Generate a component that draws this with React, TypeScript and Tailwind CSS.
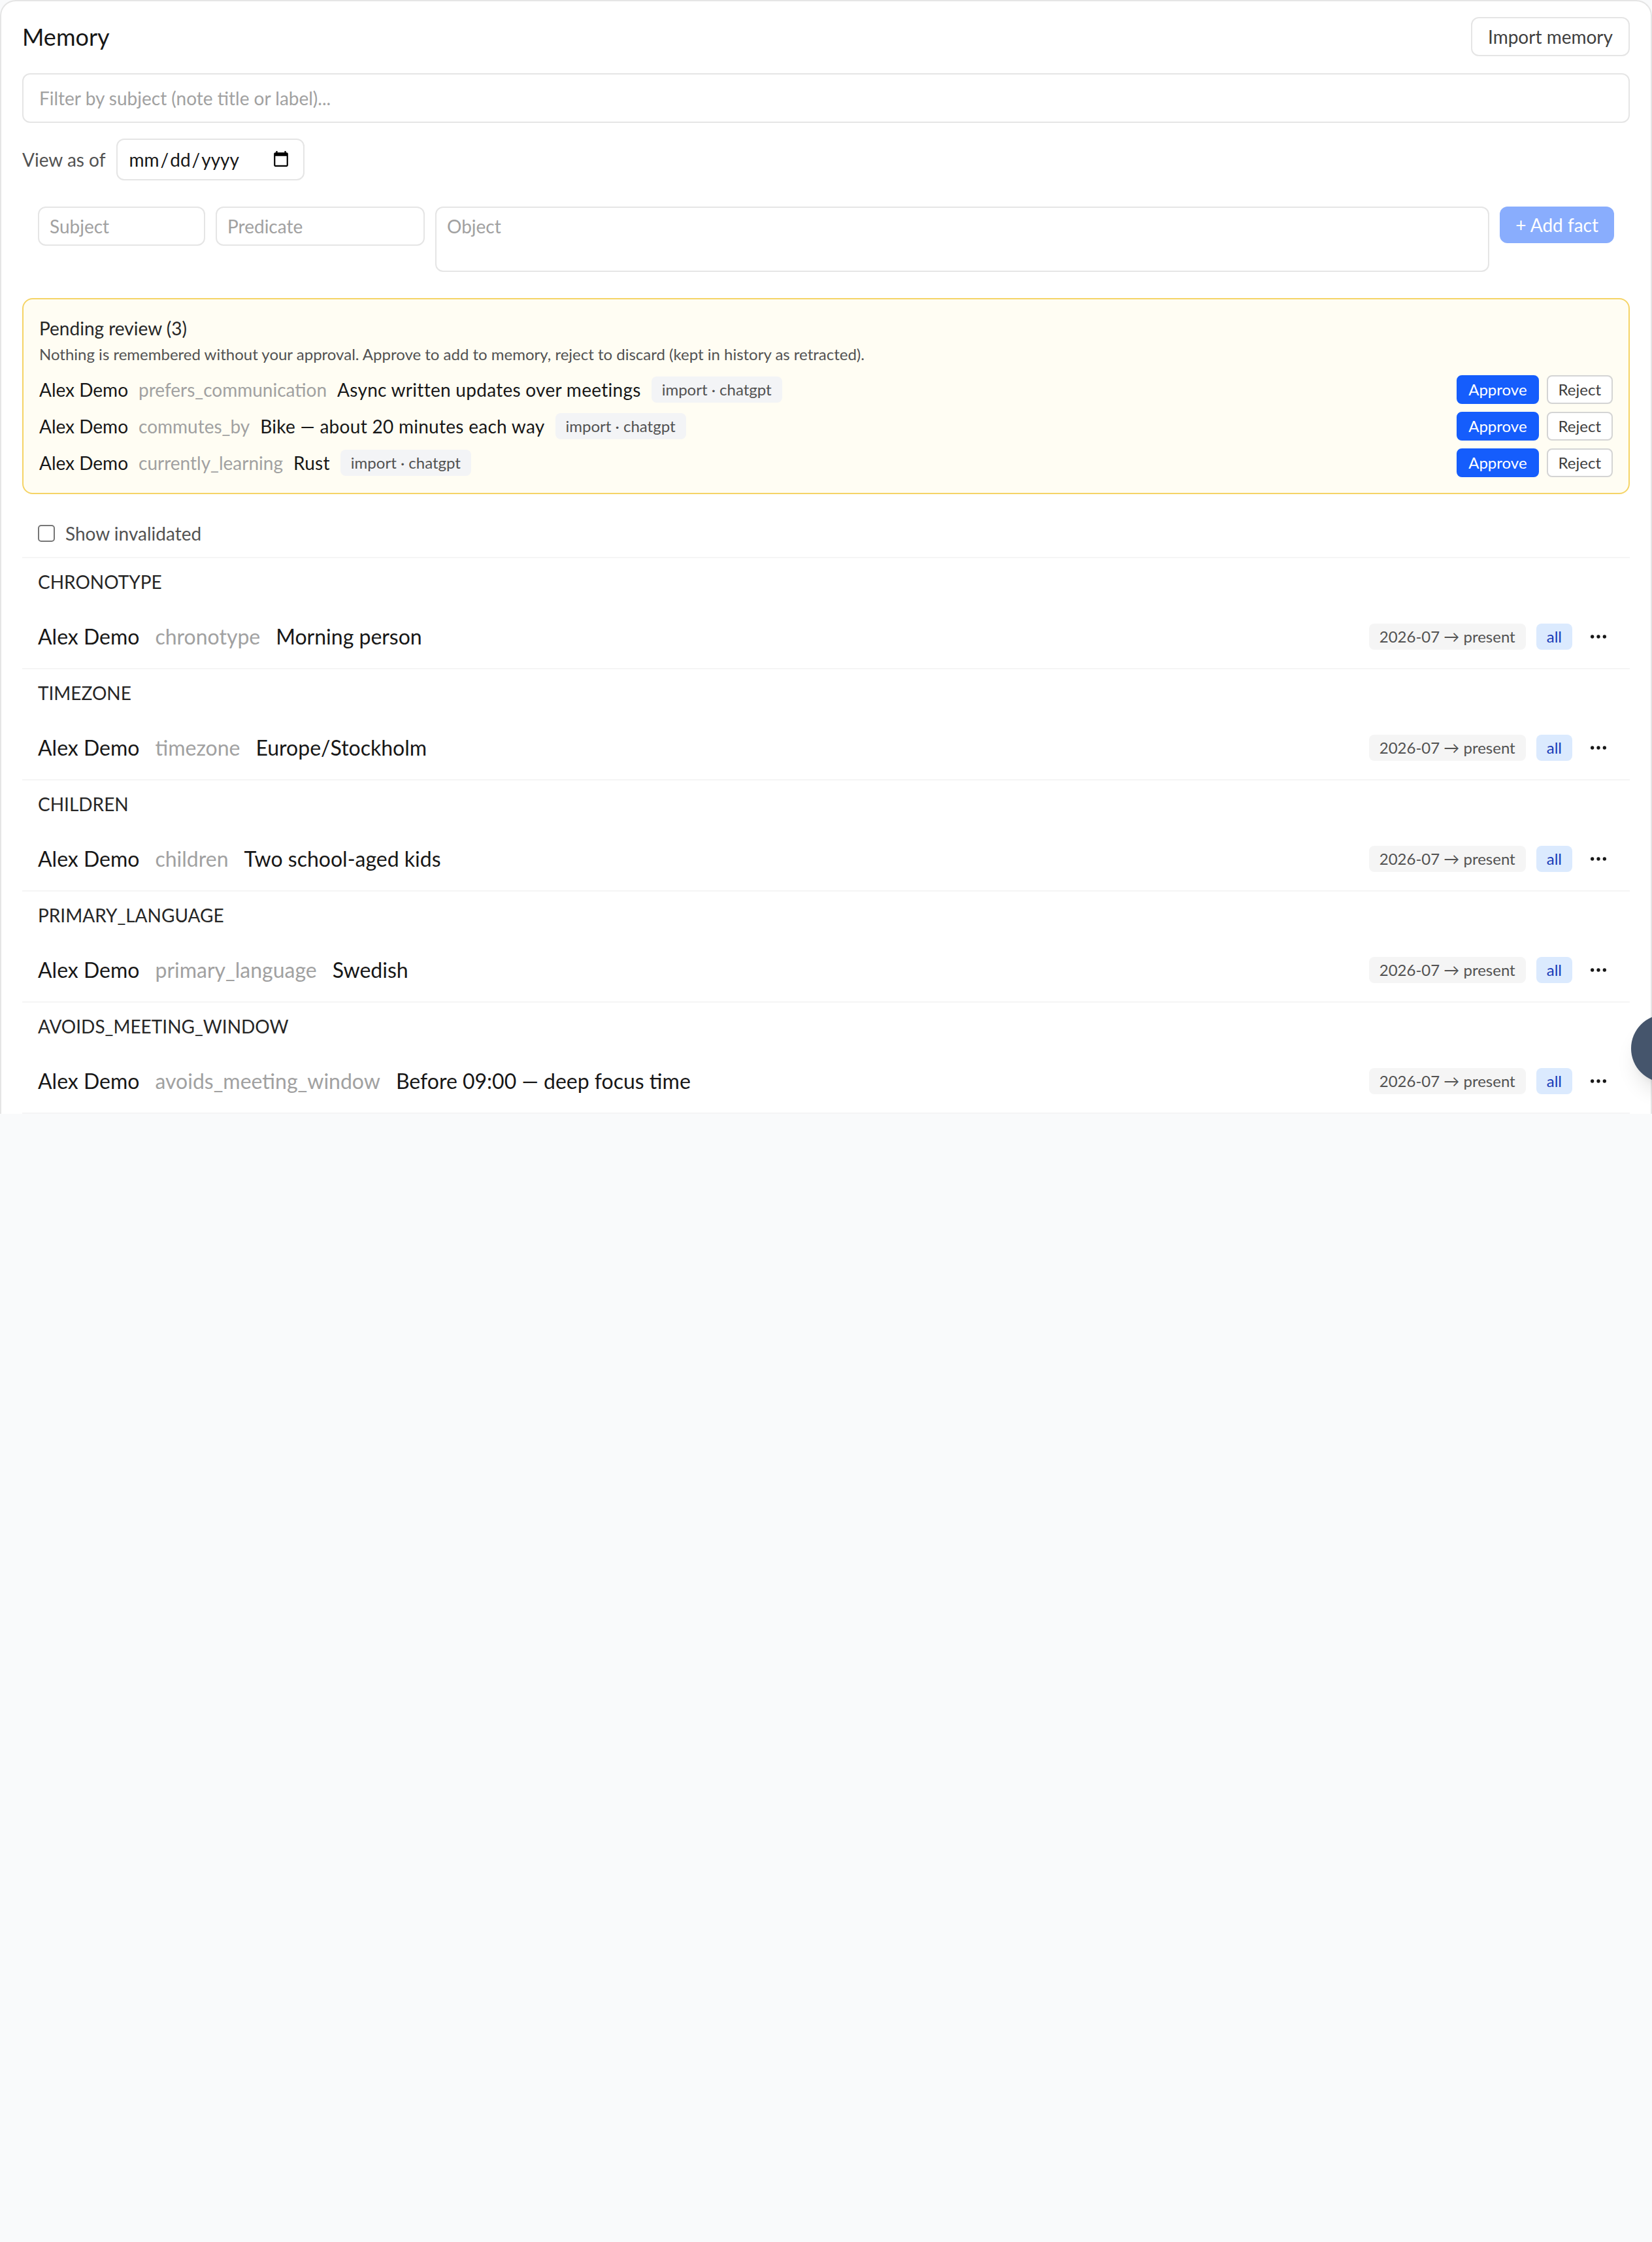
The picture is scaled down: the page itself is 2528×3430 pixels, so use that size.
import { Ellipsis } from 'lucide-react';

type Fact = { key: string; predicate: string; object: string };

const pending: Fact[] = [
  { key: 'p1', predicate: 'prefers_communication', object: 'Async written updates over meetings' },
  { key: 'p2', predicate: 'commutes_by', object: 'Bike — about 20 minutes each way' },
  { key: 'p3', predicate: 'currently_learning', object: 'Rust' },
];

const facts: Fact[] = [
  { key: 'chronotype', predicate: 'chronotype', object: 'Morning person' },
  { key: 'timezone', predicate: 'timezone', object: 'Europe/Stockholm' },
  { key: 'children', predicate: 'children', object: 'Two school-aged kids' },
  { key: 'primary_language', predicate: 'primary_language', object: 'Swedish' },
  { key: 'avoids_meeting_window', predicate: 'avoids_meeting_window', object: 'Before 09:00 — deep focus time' },
];

function PendingRow({ fact }: { fact: Fact }) {
  return (
    <div className="flex items-center justify-between h-[22px]">
      <div className="flex items-center gap-2 text-sm">
        <span className="text-neutral-900">Alex Demo</span>
        <span className="text-neutral-400">{fact.predicate}</span>
        <span className="text-neutral-900 tracking-[0.01em]">{fact.object}</span>
        <span className="text-xs text-neutral-600 bg-gray-100 rounded px-2 py-0.5">import · chatgpt</span>
      </div>
      <div className="flex items-center gap-1.5">
        <button className="text-xs text-white bg-blue-600 rounded px-2 py-0.5 border border-blue-600">Approve</button>
        <button className="text-xs text-neutral-700 bg-white rounded px-2 py-0.5 border border-neutral-300">Reject</button>
      </div>
    </div>
  );
}

function FactGroup({ fact }: { fact: Fact }) {
  return (
    <div className="border-b border-neutral-100">
      <div className="px-3 py-2 text-sm uppercase text-neutral-800">{fact.key}</div>
      <div className="px-3 py-3 flex items-center justify-between">
        <div className="flex items-center gap-3 text-base">
          <span className="text-neutral-900">Alex Demo</span>
          <span className="text-neutral-400">{fact.predicate}</span>
          <span className="text-neutral-900">{fact.object}</span>
        </div>
        <div className="flex items-center gap-2">
          <span className="text-xs text-neutral-600 bg-neutral-100 rounded px-2 py-0.5">2026-07 → present</span>
          <span className="text-xs text-blue-800 bg-blue-100 rounded px-2 py-0.5">all</span>
          <button className="w-6 h-6 flex items-center justify-center text-neutral-900">
            <Ellipsis size={16} strokeWidth={2} />
          </button>
        </div>
      </div>
    </div>
  );
}

export default function App() {
  return (
    <div className="min-h-screen bg-gray-50 overflow-hidden" style={{ fontFamily: 'Lato, "Open Sans", sans-serif' }}>
      <div className="[zoom:2] relative w-[1264px]">
        <div className="bg-white border border-b-0 border-neutral-200 rounded-t-xl px-4 pt-3 w-[1264px]">
          {/* Header */}
          <div className="flex items-center justify-between">
            <h1 className="text-lg text-neutral-900">Memory</h1>
            <button className="text-sm text-neutral-700 bg-white border border-neutral-200 rounded-md px-3 py-1">
              Import memory
            </button>
          </div>

          <input
            className="mt-[13px] w-full border border-neutral-200 rounded-md px-3 py-2 text-sm placeholder:text-neutral-400 bg-white"
            placeholder="Filter by subject (note title or label)..."
          />

          <div className="mt-3 flex items-center gap-2">
            <span className="text-sm text-neutral-600">View as of</span>
            <input type="date" className="w-36 h-8 border border-neutral-200 rounded-md px-2 text-sm text-neutral-900 bg-white" />
          </div>

          {/* Add fact */}
          <div className="mt-2 p-3 flex items-start gap-2">
            <input className="w-32 border border-neutral-200 rounded-md px-2 py-1 text-sm placeholder:text-neutral-400" placeholder="Subject" />
            <input className="w-40 border border-neutral-200 rounded-md px-2 py-1 text-sm placeholder:text-neutral-400" placeholder="Predicate" />
            <textarea
              className="flex-1 h-[50px] border border-neutral-200 rounded-md px-2 py-1 text-sm resize-none placeholder:text-neutral-400"
              placeholder="Object"
            />
            <button disabled className="bg-blue-600 opacity-50 text-white text-sm rounded-md px-3 py-1">
              + Add fact
            </button>
          </div>

          {/* Pending review */}
          <div className="mt-2 border border-[#f5d466] bg-[#fffdf3] rounded-lg p-3">
            <p className="text-sm text-neutral-800">Pending review (3)</p>
            <p className="mt-0.5 text-xs text-neutral-600">
              Nothing is remembered without your approval. Approve to add to memory, reject to discard (kept in history as retracted).
            </p>
            <div className="mt-2 space-y-1.5">
              {pending.map((p) => (
                <PendingRow key={p.key} fact={p} />
              ))}
            </div>
          </div>

          <label className="mt-3 px-3 py-2 flex items-center gap-2 text-sm text-neutral-600">
            <input type="checkbox" />
            Show invalidated
          </label>

          <div className="border-t border-neutral-100">
            {facts.map((f) => (
              <FactGroup key={f.key} fact={f} />
            ))}
          </div>
        </div>

        {/* floating button, mostly off-screen */}
        <div className="absolute left-[1248px] top-[776px] w-[52px] h-[52px] rounded-full bg-slate-600 shadow-lg" />
      </div>
    </div>
  );
}
